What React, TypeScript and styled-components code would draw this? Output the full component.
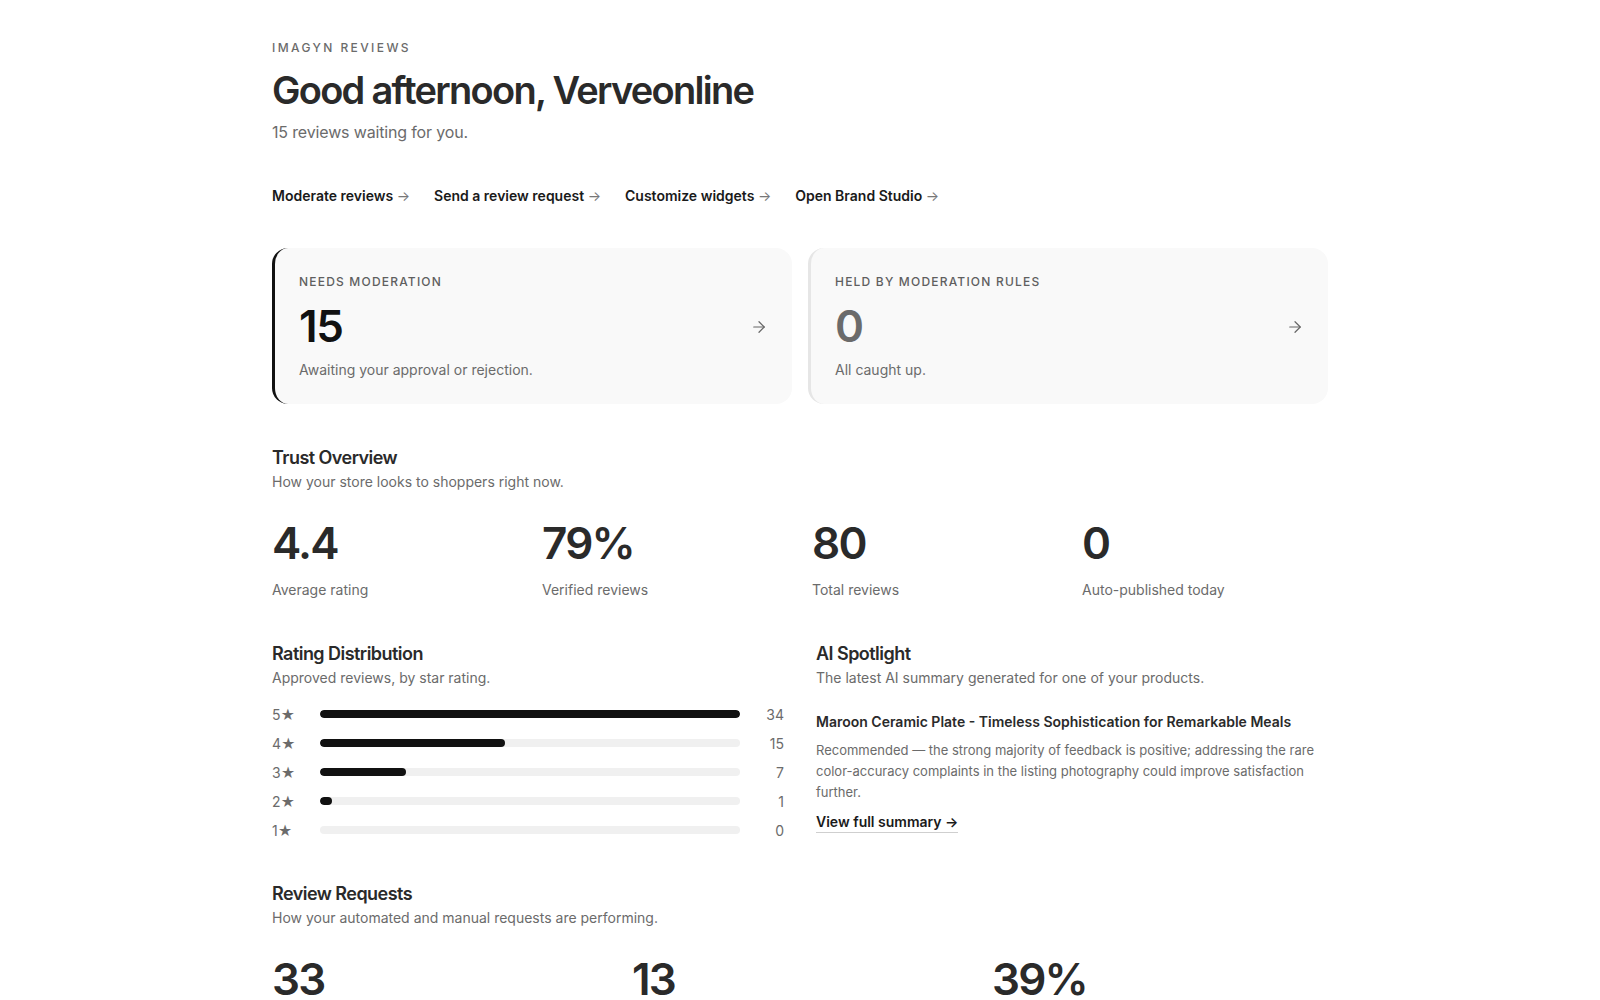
import styled, { createGlobalStyle } from "styled-components";
import { ArrowRight } from "lucide-react";

const GlobalStyle = createGlobalStyle`
  body {
    margin: 0;
    background: #ffffff;
    font-family: Inter, "Noto Sans", "Liberation Sans", sans-serif;
    color: #2a2a2a;
  }
  * {
    box-sizing: border-box;
  }
`;

const quickLinks = [
  "Moderate reviews",
  "Send a review request",
  "Customize widgets",
  "Open Brand Studio",
];

const trustStats = [
  { value: "4.4", label: "Average rating" },
  { value: "79%", label: "Verified reviews" },
  { value: "80", label: "Total reviews" },
  { value: "0", label: "Auto-published today" },
];

const ratings = [
  { stars: 5, count: 34 },
  { stars: 4, count: 15 },
  { stars: 3, count: 7 },
  { stars: 2, count: 1 },
  { stars: 1, count: 0 },
];

const requestStats = ["33", "13", "39%"];

const App = () => {
  const maxCount = Math.max(...ratings.map((r) => r.count));

  return (
    <>
      <GlobalStyle />
      <Page>
        <Eyebrow>IMAGYN REVIEWS</Eyebrow>
        <Greeting>Good afternoon, Verveonline</Greeting>
        <Lead>15 reviews waiting for you.</Lead>

        <LinkRow>
          {quickLinks.map((link) => (
            <QuickLink key={link}>
              {link} <span>→</span>
            </QuickLink>
          ))}
        </LinkRow>

        <CardGrid>
          <QueueCard $active>
            <CardBody>
              <CardLabel>NEEDS MODERATION</CardLabel>
              <CardNumber $active>15</CardNumber>
              <CardText>Awaiting your approval or rejection.</CardText>
            </CardBody>
            <ArrowRight size={18} strokeWidth={1.6} color="#666" />
          </QueueCard>
          <QueueCard>
            <CardBody>
              <CardLabel>HELD BY MODERATION RULES</CardLabel>
              <CardNumber>0</CardNumber>
              <CardText>All caught up.</CardText>
            </CardBody>
            <ArrowRight size={18} strokeWidth={1.6} color="#666" />
          </QueueCard>
        </CardGrid>

        <Section>
          <SectionTitle>Trust Overview</SectionTitle>
          <SectionSub>How your store looks to shoppers right now.</SectionSub>
          <StatGrid $cols={4}>
            {trustStats.map((s) => (
              <div key={s.label}>
                <StatValue>{s.value}</StatValue>
                <StatLabel>{s.label}</StatLabel>
              </div>
            ))}
          </StatGrid>
        </Section>

        <TwoCol>
          <div>
            <SectionTitle>Rating Distribution</SectionTitle>
            <SectionSub>Approved reviews, by star rating.</SectionSub>
            <Bars>
              {ratings.map((r) => (
                <BarRow key={r.stars}>
                  <StarLabel>
                    {r.stars}
                    <span>★</span>
                  </StarLabel>
                  <Track>
                    {r.count > 0 && (
                      <Fill style={{ width: `${(r.count / maxCount) * 100}%` }} />
                    )}
                  </Track>
                  <Count>{r.count}</Count>
                </BarRow>
              ))}
            </Bars>
          </div>
          <div>
            <SectionTitle>AI Spotlight</SectionTitle>
            <SectionSub>The latest AI summary generated for one of your products.</SectionSub>
            <ProductTitle>
              Maroon Ceramic Plate - Timeless Sophistication for Remarkable Meals
            </ProductTitle>
            <Summary>
              Recommended — the strong majority of feedback is positive; addressing the rare
              color-accuracy complaints in the listing photography could improve satisfaction
              further.
            </Summary>
            <SummaryLink>View full summary →</SummaryLink>
          </div>
        </TwoCol>

        <Section>
          <SectionTitle>Review Requests</SectionTitle>
          <SectionSub>How your automated and manual requests are performing.</SectionSub>
          <StatGrid $cols={3}>
            {requestStats.map((v) => (
              <div key={v}>
                <StatValue>{v}</StatValue>
              </div>
            ))}
          </StatGrid>
        </Section>
      </Page>
    </>
  );
};

export default App;

const Page = styled.main`
  max-width: 1056px;
  margin: 0 auto;
  padding: 40px 0 60px;
`;

const Eyebrow = styled.div`
  font-size: 12px;
  line-height: 16px;
  letter-spacing: 0.2em;
  color: #6b6b6b;
  font-weight: 500;
`;

const Greeting = styled.h1`
  margin: 12px 0 0;
  font-size: 38px;
  line-height: 44px;
  font-weight: 600;
  letter-spacing: -0.045em;
  color: #2a2a2a;
`;

const Lead = styled.p`
  margin: 8px 0 0;
  font-size: 16px;
  line-height: 24px;
  letter-spacing: -0.01em;
  color: #6b6b6b;
`;

const LinkRow = styled.nav`
  display: flex;
  gap: 24px;
  margin-top: 42px;
`;

const QuickLink = styled.a`
  font-size: 14px;
  line-height: 20px;
  font-weight: 600;
  color: #1a1a1a;
  text-decoration: none;
  span {
    color: #777;
    font-weight: 400;
  }
`;

const CardGrid = styled.div`
  display: grid;
  grid-template-columns: 1fr 1fr;
  gap: 16px;
  margin-top: 42px;
`;

const QueueCard = styled.div<{ $active?: boolean }>`
  display: flex;
  align-items: center;
  justify-content: space-between;
  height: 156px;
  padding: 2px 24px 0 24px;
  background: #f9f9f9;
  border-radius: 16px;
  border-left: 3px solid ${(p) => (p.$active ? "#111111" : "#e6e6e6")};
`;

const CardBody = styled.div`
  display: flex;
  flex-direction: column;
`;

const CardLabel = styled.div`
  font-size: 12px;
  line-height: 16px;
  letter-spacing: 0.1em;
  font-weight: 500;
  color: #5f5f5f;
`;

const CardNumber = styled.div<{ $active?: boolean }>`
  margin-top: 10px;
  font-size: 44px;
  line-height: 52px;
  font-weight: 600;
  letter-spacing: -0.03em;
  color: ${(p) => (p.$active ? "#111111" : "#6b6b6b")};
`;

const CardText = styled.div`
  margin-top: 8px;
  font-size: 14px;
  line-height: 20px;
  color: #6b6b6b;
`;

const Section = styled.section`
  margin-top: 42px;
`;

const SectionTitle = styled.h2`
  margin: 0;
  font-size: 18px;
  line-height: 24px;
  font-weight: 600;
  letter-spacing: -0.03em;
  color: #2a2a2a;
`;

const SectionSub = styled.p`
  margin: 2px 0 0;
  font-size: 14px;
  line-height: 20px;
  color: #6b6b6b;
`;

const StatGrid = styled.div<{ $cols: number }>`
  display: grid;
  grid-template-columns: repeat(${(p) => p.$cols}, 1fr);
  gap: 24px;
  margin-top: 27px;
`;

const StatValue = styled.div`
  font-size: 44px;
  line-height: 48px;
  font-weight: 600;
  letter-spacing: -0.04em;
  color: #2a2a2a;
`;

const StatLabel = styled.div`
  margin-top: 13px;
  font-size: 14px;
  line-height: 20px;
  color: #6b6b6b;
`;

const TwoCol = styled.div`
  display: grid;
  grid-template-columns: 1fr 1fr;
  gap: 32px;
  margin-top: 42px;
`;

const Bars = styled.div`
  display: flex;
  flex-direction: column;
  gap: 9px;
  margin-top: 16px;
`;

const BarRow = styled.div`
  display: grid;
  grid-template-columns: 36px 1fr 32px;
  gap: 12px;
  align-items: center;
  height: 20px;
`;

const StarLabel = styled.div`
  font-size: 14px;
  color: #6b6b6b;
  span {
    font-size: 14px;
  }
`;

const Track = styled.div`
  height: 8px;
  border-radius: 4px;
  background: #f0f0f0;
  overflow: hidden;
`;

const Fill = styled.div`
  height: 100%;
  border-radius: 4px;
  background: #111111;
`;

const Count = styled.div`
  font-size: 14px;
  color: #6b6b6b;
  text-align: right;
`;

const ProductTitle = styled.div`
  margin-top: 24px;
  font-size: 14px;
  line-height: 20px;
  font-weight: 600;
  color: #2a2a2a;
`;

const Summary = styled.p`
  margin: 8px 0 0;
  font-size: 13px;
  line-height: 21px;
  color: #6b6b6b;
`;

const SummaryLink = styled.a`
  display: inline-block;
  margin-top: 9px;
  font-size: 14px;
  line-height: 20px;
  font-weight: 600;
  color: #1a1a1a;
  text-decoration: none;
  border-bottom: 1px solid #cfcfcf;
`;
